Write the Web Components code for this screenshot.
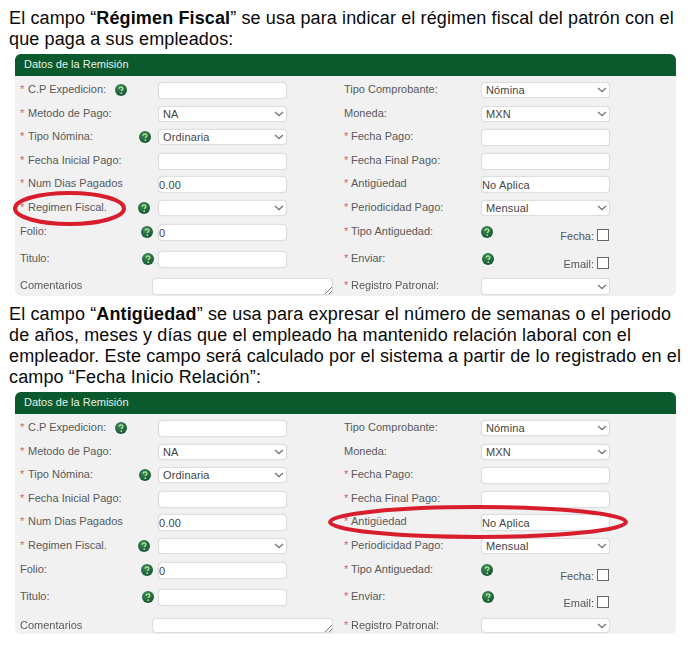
<!DOCTYPE html>
<html lang="es"><head><meta charset="utf-8"><title>Datos de la Remisión</title>
<style>
html,body{margin:0;padding:0;background:#fff}
body{font-family:"Liberation Sans",Arial,sans-serif;width:688px;height:650px;overflow:hidden}
</style></head><body>
<doc-page></doc-page>
<script>
class DocPage extends HTMLElement{
  constructor(){super();this.attachShadow({mode:'open'}).innerHTML=`<style>
  :host{display:block;padding-top:8px}
  </style>
  <doc-para>El campo “<b>Régimen Fiscal</b>” se usa para indicar el régimen fiscal del patrón con el que paga a sus empleados:</doc-para>
  <remision-panel mark="regimen"></remision-panel>
  <doc-para style="margin-top:8px">El campo “<b>Antigüedad</b>” se usa para expresar el número de semanas o el periodo de años, meses y días que el empleado ha mantenido relación laboral con el empleador. Este campo será calculado por el sistema a partir de lo registrado en el campo “Fecha Inicio Relación”:</doc-para>
  <remision-panel mark="antiguedad"></remision-panel>`;}
}
class DocPara extends HTMLElement{
  constructor(){super();this.attachShadow({mode:'open'}).innerHTML=`<style>
  :host{display:block;padding:0 5px 0 9px;width:688px;box-sizing:border-box;font:18px/21px "Liberation Sans",Arial,sans-serif;letter-spacing:.13px;color:#0a0a0a;margin-bottom:4px}
  </style><slot></slot>`;}
}
class HelpIcon extends HTMLElement{
  constructor(){super();this.attachShadow({mode:'open'}).innerHTML=`<style>
  :host{display:block;width:12px;height:12px;flex:none}
  svg{display:block}
  </style><svg width="12" height="12" viewBox="0 0 13 13"><defs><radialGradient id="g" cx=".4" cy=".3" r=".8"><stop offset="0" stop-color="#3d8a5c"/><stop offset="1" stop-color="#12502f"/></radialGradient></defs><circle cx="6.5" cy="6.5" r="6.5" fill="url(#g)"/><path d="M4.6 5.2c0-1.2.9-1.9 2-1.9s2 .7 2 1.7c0 1.4-1.7 1.4-1.7 2.7" fill="none" stroke="#a9e08a" stroke-width="1.5"/><circle cx="6.8" cy="10" r=".95" fill="#a9e08a"/></svg>`;}
}
class FormField extends HTMLElement{
  connectedCallback(){
    const k=this.getAttribute('kind')||'input',v=this.getAttribute('value')||'';
    const chev=k==='select'?`<svg class="c" width="10" height="6" viewBox="0 0 10 6"><path d="M1 1l4 3.6L9 1" fill="none" stroke="#777" stroke-width="1.3"/></svg>`:'';
    const grip=k==='area'?`<svg class="g" width="8" height="8" viewBox="0 0 8 8"><path d="M1 8l7-7M5 8l3-3" stroke="#777" stroke-width="1"/></svg>`:'';
    const h=this.getAttribute('h')||(k==='input'?17:16);
    this.attachShadow({mode:'open'}).innerHTML=`<style>
    :host{display:flex;align-items:center;box-sizing:border-box;width:${k==='area'?181:129}px;height:${h}px;background:#fff;border:1px solid #dedede;border-radius:4px;position:relative;
      box-shadow:0 0 1px #d4d4d4;font:11px "Liberation Sans",Arial,sans-serif;letter-spacing:.15px;color:#444;white-space:nowrap;padding:0 ${k==='select'?'4px':'0'};margin-left:${k==='area'?-6:0}px}
    .c{position:absolute;right:2px;top:calc(50% - 3px)}
    .g{position:absolute;right:0;bottom:0}
    </style><span>${v}</span>${chev}${grip}`;
  }
}
class FormLabel extends HTMLElement{
  connectedCallback(){
    const req=this.hasAttribute('required');
    const sw=this.getAttribute('star')||8;
    this.attachShadow({mode:'open'}).innerHTML=`<style>
    :host{display:flex;align-items:center;height:14px;font:11px "Liberation Sans",Arial,sans-serif;color:#595959;white-space:nowrap}
    i{font-style:normal;color:#c96a60;width:${sw}px;flex:none}
    </style>${req?'<i>*</i>':''}<span><slot></slot></span>`;
  }
}
class FormCheck extends HTMLElement{
  connectedCallback(){
    const top=this.getAttribute('top')||4;
    this.attachShadow({mode:'open'}).innerHTML=`<style>
    :host{display:flex;align-items:flex-end;justify-content:flex-end;gap:3px;width:129px;padding-top:${top}px;box-sizing:border-box;padding-right:1px;font:11px/13px "Liberation Sans",Arial,sans-serif;color:#555}
    span{position:relative;top:2px}
    b{display:block;width:12px;height:12px;box-sizing:border-box;border:1px solid #666;background:#fff}
    </style><span><slot></slot></span><b></b>`;
  }
}
class FormRow extends HTMLElement{
  connectedCallback(){
    this.attachShadow({mode:'open'}).innerHTML=`<style>
    :host{display:grid;grid-template-columns:138px 186px 137px 129px;align-items:start;height:${this.getAttribute('h')||24}px;padding-left:5px}
    </style><slot></slot>`;
  }
}
class RowCell extends HTMLElement{
  connectedCallback(){
    const g=this.getAttribute('gap');
    this.attachShadow({mode:'open'}).innerHTML=`<style>
    :host{display:flex;align-items:flex-start;height:17px}
    ::slotted(help-icon){margin:2px ${g}px 0 auto}
    </style><slot></slot>`;
  }
}
const ROWS=[
 {h:24,l:'* C.P Expedicion:',g:31,k:'input',v:'',rl:'Tipo Comprobante:',rk:'select',rv:'Nómina'},
 {h:23,l:'* Metodo de Pago:',k:'select',v:'NA',rl:'Moneda:',rk:'select',rv:'MXN'},
 {h:24,l:'* Tipo Nómina:',g:7,k:'select',v:'Ordinaria',rl:'* Fecha Pago:',rk:'input',rv:''},
 {h:23,l:'* Fecha Inicial Pago:',k:'input',v:'',rl:'* Fecha Final Pago:',rk:'input',rv:''},
 {h:24,l:'* Num Dias Pagados',k:'input',v:'0.00',rl:'* Antigüedad',rk:'input',rv:'No Aplica'},
 {h:24,l:'* Regimen Fiscal.',g:8,k:'select',v:'',rl:'* Periodicidad Pago:',rk:'select',rv:'Mensual'},
 {h:27,l:'Folio:',g:5,k:'input',v:'0',rl:'* Tipo Antiguedad:',rg:-12,rk:'check',rv:'Fecha:',t:[4,6]},
 {h:27,h2:29,l:'Titulo:',g:4,k:'input',v:'',rl:'* Enviar:',rg:-13,rk:'check',rv:'Email:',t:[5,6]},
 {h:18,h2:16,l:'Comentarios',k:'area',v:'',rl:'* Registro Patronal:',rk:'select',rv:''}
];
class RemisionPanel extends HTMLElement{
  connectedCallback(){
    const second=this.getAttribute('mark')==='antiguedad';
    const lab=(t,star)=>{
      const req=t.startsWith('* ');const txt=req?t.slice(2):t;
      return `<form-label ${req?'required':''} star="${star}">${txt}</form-label>`;
    };
    const rows=ROWS.map(r=>{
      const h=second&&r.h2?r.h2:r.h;
      const icon=g=>g===undefined?'':'<help-icon></help-icon>';
      const fh=r.k==='area'?(second?15:17):'';
      return `<form-row h="${h}">
        <row-cell gap="${r.g}">${lab(r.l,8)}${icon(r.g)}</row-cell>
        <form-field kind="${r.k}" value="${r.v}" ${fh?`h="${fh}"`:''}></form-field>
        <row-cell gap="${r.rg}">${lab(r.rl,7)}${icon(r.rg)}</row-cell>
        ${r.rk==='check'?`<form-check top="${r.t[second?1:0]}">${r.rv}</form-check>`:`<form-field kind="${r.rk}" value="${r.rv}" ${fh?`h="${fh}"`:''}></form-field>`}
      </form-row>`;
    }).join('');
    const mark=second
      ?`<svg class="m" style="left:313px;top:113px" width="300" height="34" viewBox="0 0 300 34"><ellipse cx="150" cy="17" rx="148" ry="15" fill="none" stroke="#d81e2c" stroke-width="4"/></svg>`
      :`<svg class="m" style="left:-2px;top:137px" width="113" height="35" viewBox="0 0 113 35"><ellipse cx="56.5" cy="17.5" rx="54.5" ry="15.5" fill="none" stroke="#d81e2c" stroke-width="4"/></svg>`;
    this.attachShadow({mode:'open'}).innerHTML=`<style>
    :host{display:block;position:relative;margin-left:15px;width:661px;background:#f1f1f1;border-radius:6px;filter:blur(.25px)}
    header{height:22px;background:#0a5a2d;border-radius:6px 6px 0 0;color:#e6efe9;font:11px/20px "Liberation Sans",Arial,sans-serif;padding-left:9px}
    .rows{padding-top:6px}
    .m{position:absolute;pointer-events:none;z-index:2}
    </style><header>Datos de la Remisión</header><div class="rows">${rows}</div>${mark}`;
  }
}
customElements.define('help-icon',HelpIcon);
customElements.define('form-field',FormField);
customElements.define('form-label',FormLabel);
customElements.define('form-check',FormCheck);
customElements.define('form-row',FormRow);
customElements.define('row-cell',RowCell);
customElements.define('remision-panel',RemisionPanel);
customElements.define('doc-para',DocPara);
customElements.define('doc-page',DocPage);
</script>
</body></html>
